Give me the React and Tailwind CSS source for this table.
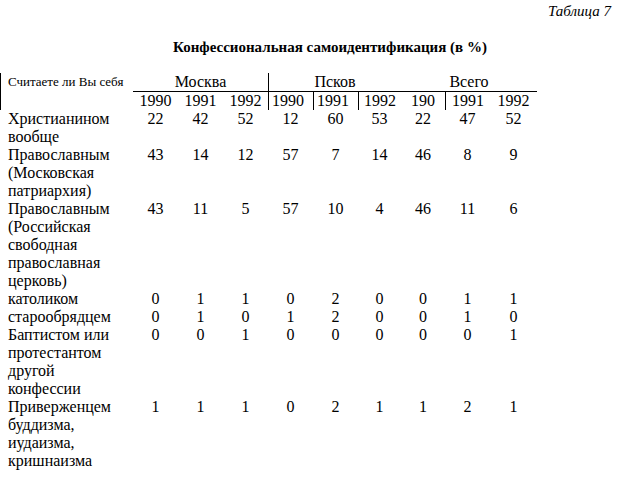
import React from 'react';

const rows = [
  { label: ['Христианином', 'вообще'], v: [22, 42, 52, 12, 60, 53, 22, 47, 52] },
  { label: ['Православным', '(Московская', 'патриархия)'], v: [43, 14, 12, 57, 7, 14, 46, 8, 9] },
  {
    label: ['Православным', '(Российская', 'свободная', 'православная', 'церковь)'],
    v: [43, 11, 5, 57, 10, 4, 46, 11, 6],
  },
  { label: ['католиком'], v: [0, 1, 1, 0, 2, 0, 0, 1, 1] },
  { label: ['старообрядцем'], v: [0, 1, 0, 1, 2, 0, 0, 1, 0] },
  { label: ['Баптистом или', 'протестантом', 'другой', 'конфессии'], v: [0, 0, 1, 0, 0, 0, 0, 0, 1] },
  { label: ['Приверженцем', 'буддизма,', 'иудаизма,', 'кришнаизма'], v: [1, 1, 1, 0, 2, 1, 1, 2, 1] },
];

const years = [
  { t: '1990', c: '' },
  { t: '1991', c: '' },
  { t: '1992', c: '' },
  { t: '1990', c: 'border-l border-black pr-[6px]' },
  { t: '1991', c: 'border-l border-black pr-[6px]' },
  { t: '1992', c: 'border-l border-black' },
  { t: '190', c: '' },
  { t: '1991', c: 'border-l border-black' },
  { t: '1992', c: '' },
];

export default function App() {
  return (
    <div className="font-serif">
      <div className="w-[622px] h-[485px] bg-white text-black font-['Liberation_Serif'] text-[16px] leading-[18px] overflow-hidden">
        <div className="flex justify-end pr-[11px] pt-[2px]">
          <span className="italic text-[15px]">Таблица 7</span>
        </div>

        <div className="pl-[38px] mt-[18px] text-center font-bold text-[15px]">
          Конфессиональная самоидентификация (в %)
        </div>

        <div className="mt-[17px] grid grid-cols-[133px_45px_45px_45px_45px_45px_43px_44px_45px_47px]">
          {/* header */}
          <div className="row-span-2 border-l border-black pl-[7px] pt-[1px] text-[13px] leading-[16px]">
            Считаете ли Вы себя
          </div>
          <div className="col-span-3 border-b border-black text-center">Москва</div>
          <div className="col-span-3 border-b border-l border-black text-center">Псков</div>
          <div className="col-span-3 border-b border-black text-center">Всего</div>

          {years.map((y, i) => (
            <div key={i} className={`text-center ${y.c}`}>
              {y.t}
            </div>
          ))}

          {rows.map((r, i) => (
            <React.Fragment key={i}>
              <div className="pl-[8px] whitespace-nowrap">
                {r.label.map((l, j) => (
                  <div key={j}>{l}</div>
                ))}
              </div>
              {r.v.map((n, j) => (
                <div key={j} className="text-center">
                  {n}
                </div>
              ))}
            </React.Fragment>
          ))}
        </div>
      </div>
    </div>
  );
}
